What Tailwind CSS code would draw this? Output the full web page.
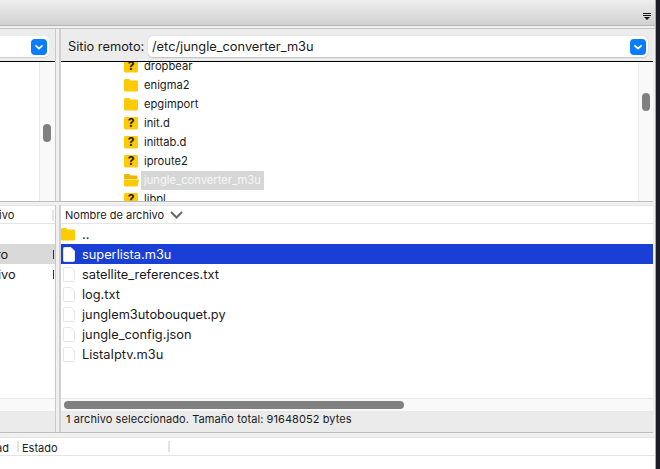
<!DOCTYPE html>
<html lang="es">
<head>
<meta charset="UTF-8">
<title>Sitio remoto</title>
<script src="https://cdn.jsdelivr.net/npm/@tailwindcss/browser@4"></script>
</head>
<body class="w-[660px] h-[469px] overflow-hidden flex bg-white text-[#1a1a1a] text-[12.8px] font-['Inter','Liberation_Sans',sans-serif]">
<svg class="hidden">
  <symbol id="folder" viewBox="0 0 14 14"><path d="M0 2.500C0 1.600.6 1 1.500 1h3.200c.5 0 .9.2 1.200.6L6.800 2.600H12.500C13.400 2.600 14 3.200 14 4.100V12C14 12.900 13.400 13.500 12.500 13.500H1.500C.6 13.500 0 12.900 0 12Z" fill="#fdcb03"/></symbol>
  <symbol id="folderq" viewBox="0 0 14 14"><path d="M0 2.500C0 1.600.6 1 1.500 1H12.500C13.400 1 14 1.600 14 2.500V12C14 12.900 13.400 13.500 12.500 13.500H1.500C.6 13.500 0 12.900 0 12Z" fill="#fdcb03"/></symbol>
  <symbol id="folderopen" viewBox="0 0 15 14"><path d="M0 2.500C0 1.600.6 1 1.500 1h3.200c.5 0 .9.2 1.200.6L6.800 2.600H12C12.900 2.600 13.500 3.200 13.500 4.100V6H0Z" fill="#e9b800"/><path d="M0 6.500H15L13.800 12.500C13.600 13.200 13.200 13.500 12.500 13.500H1.500C.6 13.500 0 12.900 0 12Z" fill="#fdcb03"/></symbol>
  <symbol id="file" viewBox="0 0 12 15"><path d="M.5 1.500C.5.900.9.500 1.500.500H8L11.500 4V13.500C11.500 14.100 11.100 14.500 10.500 14.500H1.500C.9 14.500.5 14.100.5 13.500Z" fill="#fff" stroke="#e6e6e6"/></symbol>
  <symbol id="chev" viewBox="0 0 16 16"><rect width="16" height="16" rx="4" fill="#0a7cff"/><path d="M5 6.800 8 9.600 11 6.800" fill="none" stroke="#fff" stroke-width="1.800" stroke-linecap="round" stroke-linejoin="round"/></symbol>
</svg>

<div class="w-[656px] h-full flex flex-col border-r border-[#a8a8a8] shrink-0">
  <!-- barra de herramientas -->
  <div class="h-[26px] shrink-0 flex justify-end items-end pr-[4px] pb-[5px] border-t-2 border-t-[#eeeeee] border-b border-b-[#b4b4b4] bg-gradient-to-b from-[#ececec] to-[#d0d0d0]">
    <svg class="w-[8px] h-[7px]" viewBox="0 0 8 7"><path d="M0 0H8V1H0ZM0 2H8V3H0Z" fill="#111"/><path d="M1 4H7L4 7Z" fill="#111"/></svg>
  </div>
  <div class="h-[3px] shrink-0 border-b border-[#c6c6c6] bg-[#f0f0f0]"></div>

  <div class="flex-1 flex flex-col bg-[#f0f0f0] min-h-0 pr-[2px]">
    <!-- arboles -->
    <div class="h-[173px] shrink-0 flex gap-[3px] border-b border-[#bdbdbd]">
      <div class="w-[56px] shrink-0 flex flex-col border-r border-[#c9c9c9]">
        <div class="h-[33px] shrink-0 bg-[#ececec] border-b border-black flex items-center justify-start pt-[4px]">
          <div class="w-[49px] h-[22px] bg-white rounded-r-[5px] border-b border-[#cfcfcf] flex items-center justify-end pr-[2px]"><svg class="w-[16px] h-[16px]"><use href="#chev"/></svg></div>
        </div>
        <div class="flex-1 bg-white flex justify-end">
          <div class="w-[16px] bg-[#f9f9f9] border-l border-[#ececec] pl-[3px] pt-[62px]">
            <div class="w-[8px] h-[18px] rounded-full bg-[#808080]"></div>
          </div>
        </div>
      </div>
      <div class="flex-1 min-w-0 flex flex-col border-l-2 border-[#d0d0d0]">
        <div class="h-[33px] shrink-0 bg-[#ececec] border-b border-black flex items-center pl-[7px] pr-[5px] pt-[4px]">
          <span class="w-[80px] shrink-0">Sitio remoto:</span>
          <div class="flex-1 h-[22px] bg-white rounded-[5px] border-b border-[#c4c4c4] flex items-center justify-between pl-[4px] pr-[2px] shadow-[0_0_1px_#bbb]">
            <span>/etc/jungle_converter_m3u</span>
            <svg class="w-[16px] h-[16px]"><use href="#chev"/></svg>
          </div>
        </div>
        <div class="flex-1 min-h-0 bg-white flex overflow-hidden">
          <div class="flex-1 min-w-0 overflow-hidden pl-[63px]">
            <div class="flex flex-col -mt-[5px] text-[11.200px]">
              <div class="h-[19px] shrink-0 flex items-center gap-[6px]"><div class="relative w-[14px] h-[14px] -translate-y-px"><svg class="w-[14px] h-[14px]"><use href="#folderq"/></svg><span class="absolute inset-0 text-center text-[12px] leading-[14px] font-bold">?</span></div><span>dropbear</span></div>
              <div class="h-[19px] shrink-0 flex items-center gap-[6px]"><svg class="w-[14px] h-[14px] -translate-y-px"><use href="#folder"/></svg><span>enigma2</span></div>
              <div class="h-[19px] shrink-0 flex items-center gap-[6px]"><svg class="w-[14px] h-[14px] -translate-y-px"><use href="#folder"/></svg><span>epgimport</span></div>
              <div class="h-[19px] shrink-0 flex items-center gap-[6px]"><div class="relative w-[14px] h-[14px] -translate-y-px"><svg class="w-[14px] h-[14px]"><use href="#folderq"/></svg><span class="absolute inset-0 text-center text-[12px] leading-[14px] font-bold">?</span></div><span>init.d</span></div>
              <div class="h-[19px] shrink-0 flex items-center gap-[6px]"><div class="relative w-[14px] h-[14px] -translate-y-px"><svg class="w-[14px] h-[14px]"><use href="#folderq"/></svg><span class="absolute inset-0 text-center text-[12px] leading-[14px] font-bold">?</span></div><span>inittab.d</span></div>
              <div class="h-[19px] shrink-0 flex items-center gap-[6px]"><div class="relative w-[14px] h-[14px] -translate-y-px"><svg class="w-[14px] h-[14px]"><use href="#folderq"/></svg><span class="absolute inset-0 text-center text-[12px] leading-[14px] font-bold">?</span></div><span>iproute2</span></div>
              <div class="h-[19px] shrink-0 flex items-center gap-[2px]"><svg class="w-[15px] h-[14px] -translate-y-px"><use href="#folderopen"/></svg><span class="h-[19px] leading-[19px] w-[123px] pl-[3px] bg-[#d6d6d6] text-[#f7f7f7]">jungle_converter_m3u</span></div>
              <div class="h-[19px] shrink-0 flex items-center gap-[6px]"><div class="relative w-[14px] h-[14px] -translate-y-px"><svg class="w-[14px] h-[14px]"><use href="#folderq"/></svg><span class="absolute inset-0 text-center text-[12px] leading-[14px] font-bold">?</span></div><span>libpl</span></div>
            </div>
          </div>
          <div class="w-[15px] shrink-0 bg-[#f9f9f9] border-l border-[#ececec] pl-[3px] pt-[31px]">
            <div class="w-[8px] h-[18px] rounded-full bg-[#808080]"></div>
          </div>
        </div>
      </div>
    </div>

    <div class="h-[3px] shrink-0"></div>

    <!-- listas -->
    <div class="h-[228px] shrink-0 flex gap-[3px] border-b border-[#bdbdbd]">
      <div class="w-[56px] shrink-0 flex flex-col bg-white border-r border-[#c9c9c9]">
        <div class="h-[19px] shrink-0 border-y border-[#e4e4e4] flex items-center justify-between pr-[1px] pt-[2px] text-[11px] overflow-hidden"><span class="-ml-[1px]">ivo</span><span class="w-[2px] h-[11px] bg-[#e4e4e4]"></span></div>
        <div class="h-[20px] shrink-0"></div>
        <div class="h-[20px] shrink-0 bg-[#d9d9d9] flex items-center justify-between overflow-hidden"><span class="-ml-[4px] pt-[2px]">ro</span><span class="w-[1px] h-[9px] bg-[#333] mr-[1px]"></span></div>
        <div class="h-[20px] shrink-0 flex items-center justify-between overflow-hidden"><span class="-ml-[2px] pt-[2px]">ivo</span><span class="w-[1px] h-[9px] bg-[#333] mr-[1px]"></span></div>
        <div class="flex-1"></div>
        <div class="h-[14px] shrink-0 bg-[#f9f9f9] border-y border-[#e8e8e8]"></div>
        <div class="h-[20px] shrink-0 bg-[#ebebeb]"></div>
      </div>
      <div class="flex-1 min-w-0 flex flex-col bg-white border-l-2 border-[#d0d0d0]">
        <div class="h-[19px] shrink-0 border-y border-[#e4e4e4] flex items-center pl-[4px] gap-[6px] text-[11px]">
          <span class="pt-[2px]">Nombre de archivo</span>
          <svg class="w-[13px] h-[8px]" viewBox="0 0 13 8"><path d="M1 1 6.500 6.500 12 1" fill="none" stroke="#666" stroke-width="2"/></svg>
        </div>
        <div class="h-[20px] shrink-0 flex items-center gap-[7px]"><svg class="w-[14px] h-[14px]"><use href="#folder"/></svg><span class="pt-[2px]">..</span></div>
        <div class="h-[20px] shrink-0 flex items-center pl-[2px] gap-[7px] bg-[#1a3fd6] text-white"><svg class="w-[12px] h-[15px]"><use href="#file"/></svg><span class="pt-[2px]">superlista.m3u</span></div>
        <div class="h-[20px] shrink-0 flex items-center pl-[2px] gap-[7px]"><svg class="w-[12px] h-[15px]"><use href="#file"/></svg><span class="pt-[2px]">satellite_references.txt</span></div>
        <div class="h-[20px] shrink-0 flex items-center pl-[2px] gap-[7px]"><svg class="w-[12px] h-[15px]"><use href="#file"/></svg><span class="pt-[2px]">log.txt</span></div>
        <div class="h-[20px] shrink-0 flex items-center pl-[2px] gap-[7px]"><svg class="w-[12px] h-[15px]"><use href="#file"/></svg><span class="pt-[2px]">junglem3utobouquet.py</span></div>
        <div class="h-[20px] shrink-0 flex items-center pl-[2px] gap-[7px]"><svg class="w-[12px] h-[15px]"><use href="#file"/></svg><span class="pt-[2px]">jungle_config.json</span></div>
        <div class="h-[20px] shrink-0 flex items-center pl-[2px] gap-[7px]"><svg class="w-[12px] h-[15px]"><use href="#file"/></svg><span class="pt-[2px]">ListaIptv.m3u</span></div>
        <div class="flex-1"></div>
        <div class="h-[14px] shrink-0 bg-[#f9f9f9] border-y border-[#e8e8e8] pl-[3px] pt-[2px]">
          <div class="w-[340px] h-[8px] rounded-full bg-[#808080]"></div>
        </div>
        <div class="h-[20px] shrink-0 bg-[#ebebeb] flex items-center pl-[5px] pb-[5px] text-[11px] tracking-[0.08px]">1 archivo seleccionado. Tamaño total: 91648052 bytes</div>
      </div>
    </div>

    <div class="h-[4px] shrink-0"></div>

    <!-- cola -->
    <div class="flex-1 flex flex-col bg-white -mr-[2px]">
      <div class="h-[19px] shrink-0 border-y border-[#e4e4e4] flex items-center text-[11px]">
        <span class="w-[17px] overflow-hidden pt-[3px]"><span class="block -ml-[4px]">ad</span></span>
        <span class="w-[2px] h-[11px] bg-[#e4e4e4] mr-[3px]"></span>
        <span class="w-[146px] pt-[3px]">Estado</span>
        <span class="w-[2px] h-[11px] bg-[#e4e4e4]"></span>
      </div>
    </div>
  </div>
</div>
<div class="flex-1 bg-[#1c1c26]"></div>
</body>
</html>
